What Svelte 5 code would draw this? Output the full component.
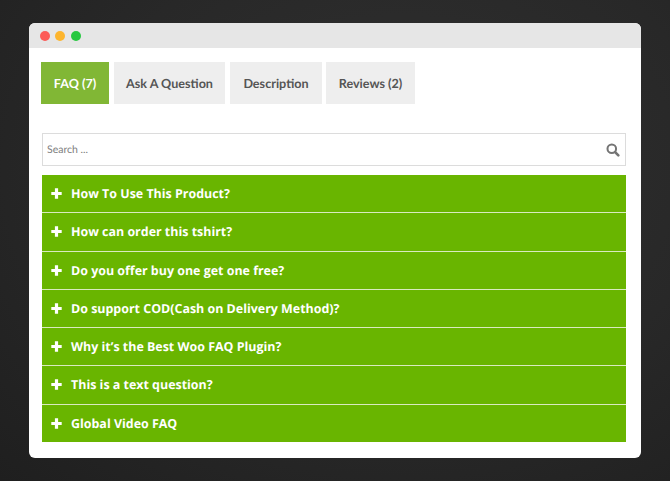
<script>
  const tabs = [
    { label: 'FAQ (7)', active: true, w: 68 },
    { label: 'Ask A Question', w: 111 },
    { label: 'Description', w: 92 },
    { label: 'Reviews (2)', w: 89 }
  ];
  const faqs = [
    'How To Use This Product?',
    'How can order this tshirt?',
    'Do you offer buy one get one free?',
    'Do support COD(Cash on Delivery Method)?',
    'Why it’s the Best Woo FAQ Plugin?',
    'This is a text question?',
    'Global Video FAQ'
  ];
</script>

<div class="stage">
  <div class="window">
    <div class="titlebar">
      <span class="dot red"></span>
      <span class="dot yellow"></span>
      <span class="dot green"></span>
    </div>
    <div class="content">
      <div class="tabs">
        {#each tabs as tab}
          <div class="tab" class:active={tab.active} style="width:{tab.w}px">{tab.label}</div>
        {/each}
      </div>
      <div class="search">
        <span class="placeholder">Search ...</span>
        <svg class="search-icon" width="14" height="14" viewBox="0 0 15 15" fill="none">
          <circle cx="6.2" cy="6.2" r="4.6" stroke="#757575" stroke-width="2.2" />
          <path d="M9.8 9.8 L13.2 13.2" stroke="#757575" stroke-width="2.8" stroke-linecap="round" />
        </svg>
      </div>
      <div class="faqs">
        {#each faqs as q}
          <div class="faq">
            <svg class="plus" width="11" height="11" viewBox="0 0 11 11">
              <path d="M3.9 0.3 h3.2 v3.6 h3.6 v3.2 h-3.6 v3.6 h-3.2 v-3.6 h-3.6 v-3.2 h3.6 z" fill="#fff" />
            </svg>
            <span>{q}</span>
          </div>
        {/each}
      </div>
    </div>
  </div>
</div>

<style>
  :global(body) {
    margin: 0;
    text-rendering: geometricPrecision;
  }
  .stage {
    width: 670px;
    height: 481px;
    box-sizing: border-box;
    padding: 23px 29px;
    background: radial-gradient(ellipse at 60% 35%, #303030 0%, #282828 55%, #1f1f1f 100%);
    overflow: hidden;
  }
  .window {
    width: 612px;
    height: 435px;
    background: #fff;
    border-radius: 6px;
    overflow: hidden;
  }
  .titlebar {
    height: 25px;
    background: #e6e6e6;
    display: flex;
    align-items: center;
    gap: 5.67px;
    padding-left: 10.7px;
  }
  .dot {
    width: 10px;
    height: 10px;
    border-radius: 50%;
  }
  .red { background: #fc5b57; }
  .yellow { background: #fdb52e; }
  .green { background: #27c840; }
  .content {
    padding: 14px 15px 0 12px;
  }
  .tabs {
    display: flex;
    gap: 5px;
  }
  .tab {
    height: 42px;
    box-sizing: border-box;
    background: #eeeeee;
    color: #555;
    font: 700 12.6px/43px Lato, sans-serif;
    text-align: center;
  }
  .tab.active {
    background: #81b735;
    color: #fff;
  }
  .tab:nth-child(3) {
    margin-right: -1px;
  }
  .search {
    margin: 29px 0 9px 1px;
    height: 33px;
    box-sizing: border-box;
    border: 1px solid #dcdcdc;
    display: flex;
    align-items: center;
    justify-content: space-between;
    padding: 0 5px 0 4px;
  }
  .placeholder {
    font: 400 10.5px Lato, sans-serif;
    color: #808080;
  }
  .search-icon {
    display: block;
  }
  .faqs {
    margin-left: 1px;
    display: flex;
    flex-direction: column;
    gap: 1px;
    background: #d9eabf;
  }
  .faq {
    height: 37.25px;
    background: #69b500;
    color: #fff;
    display: flex;
    align-items: center;
    padding-left: 9px;
    gap: 9px;
    font: 700 12.45px "Open Sans", sans-serif;
  }
  .plus {
    display: block;
    flex: none;
  }
</style>
